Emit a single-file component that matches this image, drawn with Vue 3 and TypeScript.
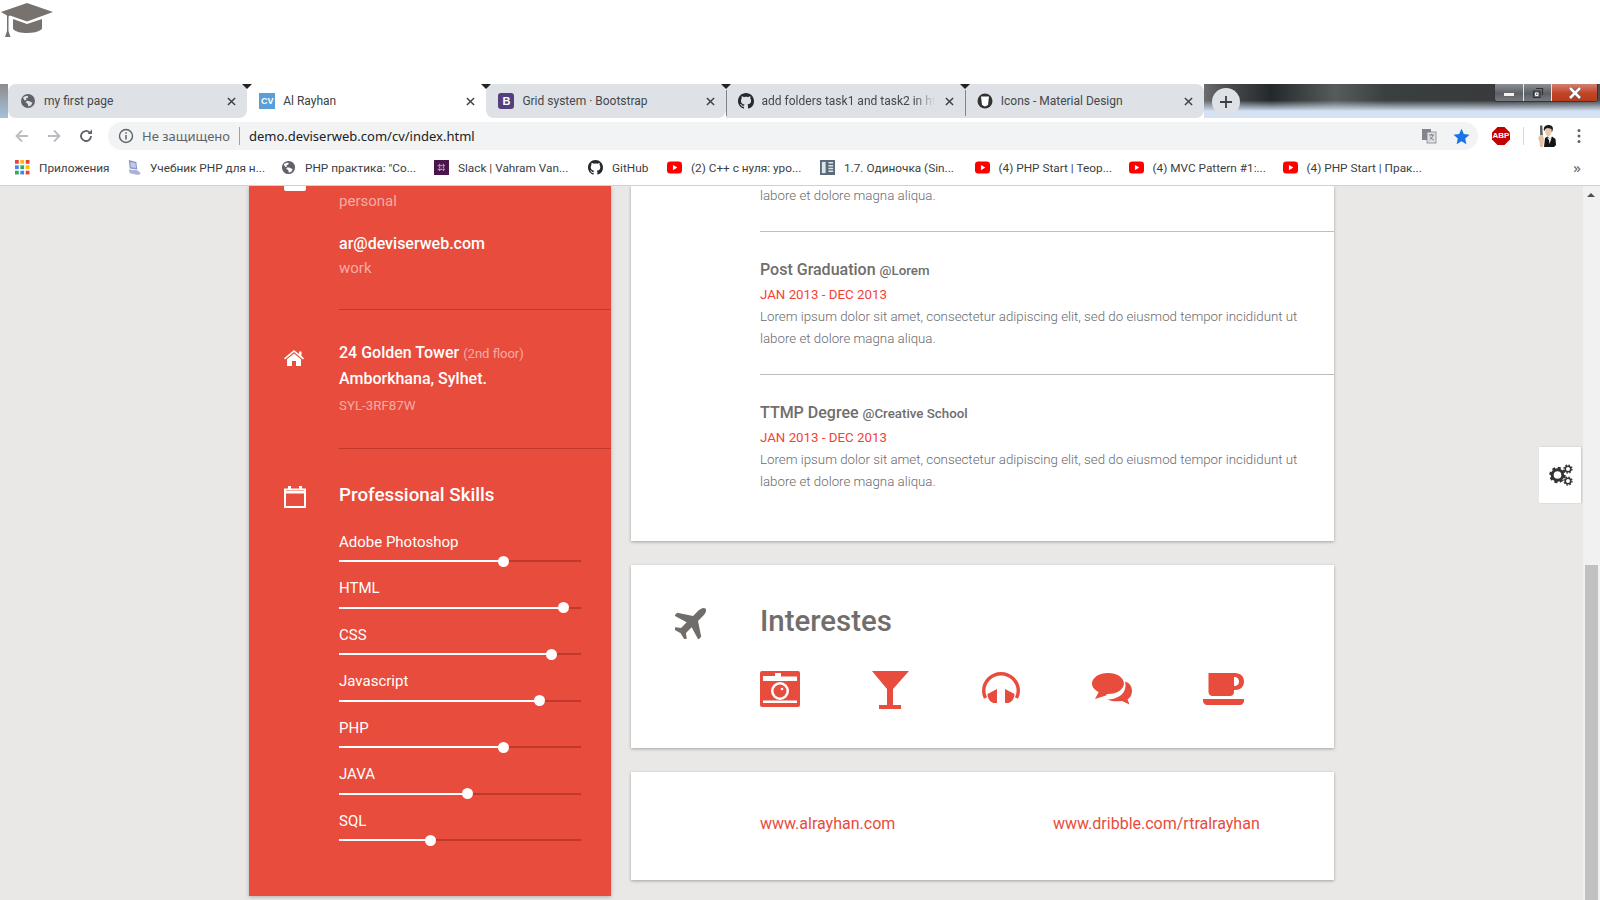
<script setup lang="ts">
const tabs = [
  { title: 'my first page', icon: 'globe', active: false, sep: false, fade: false },
  { title: 'Al Rayhan', icon: 'cv', active: true, sep: false, fade: false },
  { title: 'Grid system · Bootstrap', icon: 'boot', active: false, sep: false, fade: false },
  { title: 'add folders task1 and task2 in ht', icon: 'git', active: false, sep: true, fade: true },
  { title: 'Icons - Material Design', icon: 'mat', active: false, sep: true, fade: false }
]
const marks = [
  { title: 'Приложения', icon: 'apps', w: 111 },
  { title: 'Учебник PHP для н...', icon: 'laptop', w: 155 },
  { title: 'PHP практика: "Со...', icon: 'globe', w: 153 },
  { title: 'Slack | Vahram Van...', icon: 'slack', w: 154 },
  { title: 'GitHub', icon: 'git', w: 79 },
  { title: '(2) C++ с нуля: уро...', icon: 'yt', w: 153 },
  { title: '1.7. Одиночка (Sin...', icon: 'list', w: 154.5 },
  { title: '(4) PHP Start | Теор...', icon: 'yt', w: 154 },
  { title: '(4) MVC Pattern #1:...', icon: 'yt', w: 154 },
  { title: '(4) PHP Start | Прак...', icon: 'yt', w: 150 }
]
const skills = [
  { name: 'Adobe Photoshop', at: 164 },
  { name: 'HTML', at: 224 },
  { name: 'CSS', at: 212 },
  { name: 'Javascript', at: 200 },
  { name: 'PHP', at: 164 },
  { name: 'JAVA', at: 128 },
  { name: 'SQL', at: 91 }
]
const lorem = 'Lorem ipsum dolor sit amet, consectetur adipiscing elit, sed do eiusmod tempor incididunt ut labore et dolore magna aliqua.'
const gitPath = 'M8 0C3.58 0 0 3.58 0 8c0 3.54 2.29 6.53 5.47 7.59.4.07.55-.17.55-.38 0-.19-.01-.82-.01-1.49-2.01.37-2.53-.49-2.69-.94-.09-.23-.48-.94-.82-1.13-.28-.15-.68-.52-.01-.53.63-.01 1.08.58 1.23.82.72 1.21 1.87.87 2.33.66.07-.52.28-.87.51-1.07-1.78-.2-3.64-.89-3.64-3.95 0-.87.31-1.59.82-2.15-.08-.2-.36-1.02.08-2.12 0 0 .67-.21 2.2.82.64-.18 1.32-.27 2-.27.68 0 1.36.09 2 .27 1.53-1.04 2.2-.82 2.2-.82.44 1.1.16 1.92.08 2.12.51.56.82 1.27.82 2.15 0 3.07-1.87 3.75-3.65 3.95.29.25.54.73.54 1.48 0 1.07-.01 1.93-.01 2.2 0 .21.15.46.55.38A8.013 8.013 0 0016 8c0-4.42-3.58-8-8-8z'
const globePath = 'M8 1a7 7 0 1 0 0 14A7 7 0 0 0 8 1zM3 4.5c1-.8 2.200-1.500 3.500-1.700L8.500 3.500 7.500 5 6 5.300 6.300 7 4.500 7.500zM8.500 13.500 7.500 10.500 5.500 9.500 7 7.800 9.500 8.200 12.500 9.800 11 12.500z'
</script>

<template>
  <div class="screen">
    <div class="desktop-top">
      <svg class="cap" viewBox="0 0 54 37" width="54" height="37">
        <path fill="#77726e" d="M1 11 27 2 53 11 27 20.500 10 14.500 8.500 15.500V30L10.500 36H5L7 30V14.500z" />
        <path fill="#77726e" d="M13 18 27 23 42 18V28C38 31 33 32 27 32 21 32 16 31 13 28z" />
      </svg>
    </div>

    <div class="tabstrip">
      <div class="frame-left"></div>
      <div v-for="(t, i) in tabs" :key="t.title" class="tab" :class="{ active: t.active, sep: t.sep, lastTab: i === tabs.length - 1 }">
        <span v-if="i > 0" class="tick"></span>
        <svg v-if="t.icon === 'globe'" class="fav" viewBox="0 0 16 16"><path fill="#5f6368" fill-rule="evenodd" :d="globePath" /></svg>
        <span v-else-if="t.icon === 'cv'" class="fav cv">CV</span>
        <span v-else-if="t.icon === 'boot'" class="fav boot">B</span>
        <svg v-else-if="t.icon === 'git'" class="fav" viewBox="0 0 16 16"><path fill="#24292e" :d="gitPath" /></svg>
        <svg v-else class="fav" viewBox="0 0 16 16"><circle cx="8" cy="8" r="7.500" fill="#333" /><path fill="#fff" d="M4 3.500h8L11 12 8 13.500 5 12z" /></svg>
        <span class="tab-title" :class="{ fade: t.fade }">{{ t.title }}</span>
        <svg class="tab-x" viewBox="0 0 10 10"><path d="M1 1l8 8M9 1l-8 8" stroke="#3c4043" stroke-width="1.600" /></svg>
      </div>
      <div class="frame-right">
        <span class="plus">
          <svg viewBox="0 0 14 14" width="14" height="14"><path d="M7 1v12M1 7h12" stroke="#3c4043" stroke-width="1.800" /></svg>
        </span>
        <div class="winbtns">
          <span class="wb wb-a"><i class="wb-min"></i></span>
          <span class="wb wb-b">
            <svg viewBox="0 0 12 12" width="12" height="12"><path d="M4 1.500h6.500V8M1.500 4h6.500v6.500H1.500z" fill="none" stroke="#333" stroke-width="1.200" /><path d="M3.500 6h2.500v2.500H3.500z" fill="none" stroke="#fff" stroke-width="1" /></svg>
          </span>
          <span class="wb wb-close">
            <svg viewBox="0 0 14 12" width="14" height="12"><path d="M2 1l10 10M12 1 2 11" stroke="#555" stroke-width="3.800" /><path d="M2 1l10 10M12 1 2 11" stroke="#fff" stroke-width="2.600" /></svg>
          </span>
        </div>
      </div>
    </div>

    <div class="toolbar">
      <svg class="nav" viewBox="0 0 16 16"><path d="M14 8H3M8 2.500 2.500 8 8 13.500" fill="none" stroke="#b9bcc0" stroke-width="1.800" /></svg>
      <svg class="nav" viewBox="0 0 16 16"><path d="M2 8h11M8 2.500 13.500 8 8 13.500" fill="none" stroke="#b9bcc0" stroke-width="1.800" /></svg>
      <svg class="nav" viewBox="0 0 16 16"><path d="M13 8a5 5 0 1 1-1.500-3.600" fill="none" stroke="#5f6368" stroke-width="1.800" /><path fill="#5f6368" d="M9.500 6H14V1.500z" /></svg>
      <div class="omni">
        <svg class="info" viewBox="0 0 16 16" width="16" height="16"><circle cx="8" cy="8" r="6.500" fill="none" stroke="#5f6368" stroke-width="1.400" /><path d="M8 7v4.500M8 4.300v1.500" stroke="#5f6368" stroke-width="1.500" /></svg>
        <span class="insecure">Не защищено</span>
        <span class="omni-sep"></span>
        <span class="url">demo.deviserweb.com/cv/index.html</span>
        <svg class="trans" viewBox="0 0 16 16" width="16" height="16"><rect x="1" y="1" width="9" height="11" fill="#80868b" /><rect x="6" y="4" width="9" height="11" fill="#dfe1e3" stroke="#80868b" stroke-width=".8" /><path d="M8 7h5M10.500 6v1M12 7c-.5 2.500-2 4-3.500 5M9 8.500c1 2 2.500 3 4 3.500" fill="none" stroke="#666" stroke-width=".8" /></svg>
        <svg class="star" viewBox="0 0 16 16" width="17" height="17"><path fill="#1a73e8" d="M8 .8l2.200 4.900 5.300.6-4 3.600 1.100 5.300L8 12.500l-4.600 2.700 1.100-5.300-4-3.600 5.300-.6z" /></svg>
      </div>
      <div class="ext">
        <svg viewBox="0 0 18 18" width="18" height="18"><path fill="#c30000" d="M5.500 0h7L18 5.500v7L12.500 18h-7L0 12.500v-7z" /></svg>
        <span class="abp">ABP</span>
      </div>
      <span class="ext-sep"></span>
      <svg class="avatar" viewBox="0 0 19 22" width="19" height="22">
        <path fill="#1c1c1c" d="M7 6C6 2 8.500 0 11.500 0S17 2 15.500 6l-1 1C14 4 12 3.500 10.500 3.500 9 3.500 8 5 7 6z" />
        <path fill="#eac8ac" d="M8 4c2-1 4-1 6.500 0 .5 3-1 7.500-3.300 7.500S8 7.500 8 4z" />
        <path fill="#141414" d="M7 22 8 13 10.500 11.500 13 14 15 11.500 18.500 14 19 20 17 22z" />
        <path fill="#fff" d="M9.800 12.500 12 15 12.500 19 14.800 12 13 13.800z" />
        <path fill="#5d5d5d" d="M3 .5h2.300l.5 9.500H3.200z" />
        <path fill="#e6c3a6" d="M1 13l2-3h3l1 4-1 8H3L2.500 17z" />
      </svg>
      <svg class="dots" viewBox="0 0 4 16" width="4" height="16"><circle cx="2" cy="2.500" r="1.500" fill="#5f6368" /><circle cx="2" cy="8" r="1.500" fill="#5f6368" /><circle cx="2" cy="13.500" r="1.500" fill="#5f6368" /></svg>
    </div>

    <div class="bookmarks">
      <div v-for="m in marks" :key="m.title" class="mark" :style="{ width: m.w + 'px' }">
        <svg v-if="m.icon === 'apps'" class="mi" viewBox="0 0 14 14">
          <g v-for="r in 3" :key="r">
            <rect v-for="c in 3" :key="c" :x="(c - 1) * 5" :y="(r - 1) * 5" width="3.500" height="3.500" :fill="['#e94235', '#fbbc04', '#e94235', '#4285f4', '#34a853', '#fbbc04', '#34a853', '#4285f4', '#e94235'][(r - 1) * 3 + c - 1]" />
          </g>
        </svg>
        <svg v-else-if="m.icon === 'laptop'" class="mi" viewBox="0 0 16 16"><path fill="#8a93c8" d="M3 0l8 2 1 8-8-1z" /><path fill="#c4c9ea" d="M4.500 2l5.500 1.300.7 5.200-5.500-.7z" /><path fill="#aab0dc" d="M3 10l9 1 4 3-3 2-9-2z" /></svg>
        <svg v-else-if="m.icon === 'globe'" class="mi" viewBox="0 0 16 16"><path fill="#5f6368" fill-rule="evenodd" :d="globePath" /></svg>
        <svg v-else-if="m.icon === 'slack'" class="mi" viewBox="0 0 16 16"><rect width="16" height="16" fill="#4a154b" /><path d="M6 4v8M10 4v8M4 6h8M4 10h8" stroke="#b89ab8" stroke-width="1.300" stroke-dasharray="2 .8" /></svg>
        <svg v-else-if="m.icon === 'git'" class="mi" viewBox="0 0 16 16"><path fill="#24292e" :d="gitPath" /></svg>
        <svg v-else-if="m.icon === 'yt'" class="mi" viewBox="0 0 16 16"><rect y="1.500" width="16" height="13" rx="3.500" fill="#f00" /><path fill="#fff" d="M6.300 5.200 11 8l-4.700 2.800z" /></svg>
        <svg v-else class="mi" viewBox="0 0 16 16"><rect width="16" height="16" fill="#5a6a78" /><rect x="2" y="2" width="4" height="12" fill="#dfe4e8" /><path d="M9 3h5M9 6h5M9 9h5M9 12h5" stroke="#dfe4e8" stroke-width="1.600" /></svg>
        <span class="mark-t">{{ m.title }}</span>
      </div>
      <span class="more">»</span>
    </div>

    <div class="page">
      <div class="columns">
        <aside class="side">
          <div class="side-row contact">
            <div class="side-ic"><span class="mail-tail"></span></div>
            <div class="side-tx">
              <div class="dim">personal</div>
              <div class="strong gap-top">ar@deviserweb.com</div>
              <div class="dim">work</div>
            </div>
          </div>
          <div class="side-row address">
            <div class="side-ic">
              <svg class="home" viewBox="0 0 20 16" width="20" height="16"><path fill="#fff" d="M10 0 15 4V1.500h2.500V6L20 8.300 19 9.500 10 2 1 9.500 0 8.300z" /><path fill="#fff" d="M10 3.500 17 9.300V16h-5v-5H8v5H3V9.300z" /></svg>
            </div>
            <div class="side-tx tall">
              <div class="strong first-line">24 Golden Tower <small>(2nd floor)</small></div>
              <div class="strong">Amborkhana, Sylhet.</div>
              <div class="zip">SYL-3RF87W</div>
            </div>
          </div>
          <div class="side-row skills">
            <div class="side-ic">
              <svg class="cal" viewBox="0 0 22 22" width="22" height="22"><path fill="none" stroke="#fff" stroke-width="2" d="M1 3.500h20V21H1z" /><path fill="#fff" d="M1 5h20v2.500H1zM4 0h3v4H4zM15 0h3v4h-3z" /></svg>
            </div>
            <div class="side-tx">
              <h3>Professional Skills</h3>
              <div v-for="s in skills" :key="s.name" class="skill">
                <div class="skill-name">{{ s.name }}</div>
                <div class="track">
                  <div class="fill" :style="{ width: s.at + 'px' }"><span class="knob"></span></div>
                </div>
              </div>
            </div>
          </div>
        </aside>

        <main class="right">
          <section class="card first">
            <p class="cut">labore et dolore magna aliqua.</p>
            <div class="entry">
              <h4>Post Graduation <small>@Lorem</small></h4>
              <div class="date">JAN 2013 - DEC 2013</div>
              <p>{{ lorem }}</p>
            </div>
            <div class="entry last">
              <h4>TTMP Degree <small>@Creative School</small></h4>
              <div class="date">JAN 2013 - DEC 2013</div>
              <p>{{ lorem }}</p>
            </div>
          </section>

          <section class="card interests">
            <div class="plane-col">
              <svg viewBox="-17 -17 34 34" width="34" height="34"><path fill="#6f6c69" transform="rotate(45)" d="M0-19C2-19 3.500-16 3.500-13V-5L17 4V8L3.500 4V12L8 15.500V18L0 16-8 18V15.500L-3.500 12V4L-17 8V4L-3.500-5V-13C-3.500-16-2-19 0-19Z" /></svg>
            </div>
            <div>
              <h2>Interestes</h2>
              <div class="hobbies">
                <div class="hobby">
                  <svg viewBox="0 0 40 36" width="40" height="36"><rect width="40" height="36" rx="2" fill="#e74c3c" /><path fill="#fff" d="M3 5h12V2h6v3.500h16V10H3zM3 29.500h34V32H3z" /><circle cx="20" cy="20" r="9" fill="#fff" /><circle cx="20" cy="20" r="6.500" fill="#e74c3c" /><circle cx="22" cy="18" r="1.300" fill="#fff" /></svg>
                </div>
                <div class="hobby martini">
                  <svg viewBox="0 0 37 38" width="37" height="38"><path fill="#e74c3c" d="M0 0H37L21 18V34H29V38H7V34H15V18z" /></svg>
                </div>
                <div class="hobby phones">
                  <svg viewBox="0 0 38 32" width="38" height="32">
                    <path fill="none" stroke="#e74c3c" stroke-width="3.400" d="M3.500 26C2.200 23.500 1.700 21 1.700 19A17.300 17.300 0 0 1 36.300 19C36.300 21 35.800 23.500 34.500 26" />
                    <path fill="#e74c3c" d="M5.500 22 15 17V31H11.500C8 30 5.500 26.500 5.500 22zM32.500 22 23 17V31H26.500C30 30 32.500 26.500 32.500 22z" />
                  </svg>
                </div>
                <div class="hobby">
                  <svg viewBox="0 0 40 32" width="40" height="32">
                    <path fill="#e74c3c" d="M16 0C25 0 32 4.700 32 10.500S25 21 16 21C15 21 14.500 21 14 22.500L3 26 6.700 19C2.500 17 0 14 0 10.500 0 4.700 7 0 16 0z" />
                    <path fill="#e74c3c" d="M33 8.500C38 10 40 14 40 18 40 22 38 25 35.500 26.500L37.500 31.500 30 28C25 28.500 20 28.500 15 26.500 25 26.500 36 21 33 8.500z" />
                  </svg>
                </div>
                <div class="hobby">
                  <svg viewBox="0 0 41 32" width="41" height="32">
                    <path fill="#e74c3c" fill-rule="evenodd" d="M5.500 0H32C37.500 0 41 3.500 41 8.500 41 13.500 37.500 17 32 17H31V19C31 21.500 29 23 27 23H9.500C7.500 23 5.500 21.500 5.500 19zM31 4V13C34.500 13 36 11 36 8.500 36 6 34.500 4 31 4z" />
                    <path fill="#e74c3c" d="M0 26H41V28C41 30 39 32 37 32H4C2 32 0 30 0 28z" />
                  </svg>
                </div>
              </div>
            </div>
          </section>

          <section class="card links">
            <a class="link wide">www.alrayhan.com</a>
            <a class="link">www.dribble.com/rtralrayhan</a>
          </section>
        </main>
      </div>

      <div class="gear">
        <svg viewBox="0 0 24 22" width="24" height="22">
          <circle cx="8.500" cy="11" r="5.300" fill="none" stroke="#333" stroke-width="3" />
          <circle cx="8.500" cy="11" r="7" fill="none" stroke="#333" stroke-width="2.500" stroke-dasharray="3 2.500" />
          <circle cx="19" cy="5" r="2.800" fill="none" stroke="#333" stroke-width="1.600" />
          <circle cx="19" cy="5" r="4" fill="none" stroke="#333" stroke-width="1.300" stroke-dasharray="1.600 1.540" />
          <circle cx="19" cy="17" r="2.800" fill="none" stroke="#333" stroke-width="1.600" />
          <circle cx="19" cy="17" r="4" fill="none" stroke="#333" stroke-width="1.300" stroke-dasharray="1.600 1.540" />
        </svg>
      </div>

      <div class="scrollbar">
        <span class="arrow"></span>
        <span class="thumb"></span>
      </div>
    </div>
  </div>
</template>

<style scoped>
.screen { width: 1600px; height: 900px; overflow: hidden; display: flex; flex-direction: column; background: #fff; font-family: Roboto, "Noto Sans", sans-serif; }
.desktop-top { height: 84px; flex: none; padding-top: 1px; box-sizing: border-box; }
.cap { display: block; }

.tabstrip { height: 34px; flex: none; display: flex; }
.frame-left { width: 8px; background: linear-gradient(to bottom, #8c8c8c, #a8c0dc); }
.tab { width: 239.200px; height: 34px; box-sizing: border-box; display: flex; align-items: center; padding: 0 8px 0 12px; background: #dee1e6; border-radius: 8px; position: relative; font: 12px Roboto, sans-serif; color: #44474b; }
.tab.active { background: #fff; color: #3c4043; border-radius: 8px 8px 0 0; }
.tab.sep { border-radius: 0; }
.tab.sep::before { content: ""; position: absolute; left: 0; top: 6px; bottom: 2px; width: 1px; background: #80848a; }
.tab.lastTab { border-radius: 0 8px 8px 0; }
.tick { position: absolute; left: -5px; top: 0; width: 0; height: 0; border: 5px solid transparent; border-top-color: #222; border-bottom: 0; }
.fav { width: 16px; height: 16px; flex: none; display: block; margin-right: 8px; }
.cv { background: #5a9fd8; color: #fff; font: bold 9px/16px "Liberation Sans", sans-serif; text-align: center; }
.boot { background: #563d7c; color: #fff; font: bold 11px/16px "Liberation Sans", sans-serif; text-align: center; border-radius: 3px; }
.tab-title { flex: 1; min-width: 0; overflow: hidden; white-space: nowrap; }
.tab-title.fade { -webkit-mask-image: linear-gradient(to right, #000 88%, transparent 100%); mask-image: linear-gradient(to right, #000 88%, transparent 100%); }
.tab-x { width: 9px; height: 9px; flex: none; margin: 0 3px 0 10px; }
.frame-right { flex: 1; position: relative; display: flex; justify-content: space-between; background: linear-gradient(to bottom, rgba(212,226,244,0) 48%, rgba(212,226,244,1) 80%), linear-gradient(to right, #6b6d6e 0, #4a4c4e 6%, #23282a 17%, #565c5c 33%, #3a3f40 46%, #383a3b 75%, #4c4e50 100%); }
.plus { width: 28px; height: 28px; margin: 4px 0 0 8px; background: #dee1e6; border-radius: 50%; display: flex; align-items: center; justify-content: center; }
.winbtns { display: flex; height: 18px; margin-right: 2px; border: 1px solid #33373b; border-top: 0; border-radius: 0 0 4px 4px; box-shadow: inset 0 0 0 1px rgba(255,255,255,.55); box-sizing: border-box; width: 104px; overflow: hidden; }
.wb { flex: none; display: flex; align-items: center; justify-content: center; border-right: 1px solid #e5e5e5; }
.wb-a { width: 28px; background: linear-gradient(to bottom, #8a8f93, #5d6165 55%, #767a7e); }
.wb-b { width: 27px; background: linear-gradient(to bottom, #8a8f93, #5d6165 55%, #767a7e); }
.wb-min { width: 10px; height: 3px; background: #f2f2f2; margin-top: 4px; border: 1px solid #666; box-sizing: content-box; }
.wb-close { flex: 1; border: 0; background: linear-gradient(to bottom, #d08070, #c24427 55%, #b63a1c); }

.toolbar { height: 34px; flex: none; display: flex; align-items: center; box-sizing: border-box; padding-left: 14px; padding-right: 19px; padding-top: 2px; }
.nav { width: 16px; height: 16px; flex: none; margin-right: 16px; }
.omni { width: 1370px; height: 28px; margin-left: -2px; background: #f1f3f4; border-radius: 14px; display: flex; align-items: center; padding-left: 10px; box-sizing: border-box; flex: none; }
.info { flex: none; margin-right: 8px; }
.insecure { font: 13px "Noto Sans", sans-serif; color: #5f6368; width: 89px; white-space: nowrap; flex: none; }
.omni-sep { width: 1px; height: 18px; background: #9aa0a6; margin: 0 9px 0 8px; flex: none; }
.url { font: 13px "Noto Sans", sans-serif; color: #202124; flex: 1; white-space: nowrap; }
.trans { flex: none; margin-right: 16px; }
.star { flex: none; margin-right: 8px; }
.ext { width: 18px; height: 18px; position: relative; margin-left: 14px; flex: none; }
.ext svg { display: block; }
.abp { position: absolute; inset: 0; color: #fff; font: bold 8px/18px "Liberation Sans", sans-serif; text-align: center; }
.ext-sep { width: 1px; height: 18px; background: #d8d9db; margin-left: 13px; flex: none; }
.avatar { flex: none; margin-left: 13px; }
.dots { flex: none; margin-left: 21px; }

.bookmarks { height: 34px; flex: none; display: flex; align-items: center; padding: 0 0 2px 15px; box-sizing: border-box; border-bottom: 1px solid #d0d1d3; position: relative; }
.mark { display: flex; align-items: center; flex: none; font: 11.800px Roboto, "Noto Sans", sans-serif; color: #3c4043; white-space: nowrap; }
.mi { width: 15px; height: 15px; flex: none; margin-right: 9px; }
.more { position: absolute; right: 19px; top: 5px; font: 15px "Noto Sans", sans-serif; color: #5f6368; }

.page { height: 714px; flex: none; background: #e9e8e6; position: relative; overflow: hidden; display: flex; }
.columns { flex: 1; display: flex; align-items: flex-start; padding-left: 249px; gap: 20px; }

.side { width: 362px; height: 710px; flex: none; background: #e74c3c; box-shadow: 0 1px 4px rgba(0,0,0,.25); color: #fff; }
.side-row { display: flex; }
.side-ic { width: 90px; flex: none; padding-left: 35px; box-sizing: border-box; }
.side-tx { flex: 1; line-height: 24px; font-size: 16px; border-bottom: 1px solid #c0392b; }
.contact .side-tx { padding: 3px 0 29px; }
.mail-tail { display: block; width: 22px; height: 5px; background: #fff; border-radius: 0 0 2px 2px; }
.dim { color: rgba(255,255,255,.55); font-size: 15px; font-weight: 400; }
.strong { font-weight: 500; }
.gap-top { margin-top: 19px; }
.address .side-tx { padding: 30px 0 29px; line-height: 26px; }
.first-line { line-height: 25px; }
.home { display: block; margin-top: 40px; }
.strong small { font-size: 13px; font-weight: 400; color: rgba(255,255,255,.55); }
.zip { font-size: 13.300px; color: rgba(255,255,255,.55); margin-top: 1px; }
.skills .side-tx { border: 0; padding-top: 31px; padding-right: 30px; }
.cal { display: block; margin-top: 37px; }
h3 { margin: 0 0 20px; font-size: 18.800px; line-height: 30px; font-weight: 500; }
.skill { height: 46.500px; display: flow-root; }
.skill-name { font-size: 15px; line-height: 24px; font-weight: 400; margin-top: -.3px; margin-bottom: 6.300px; }
.track { height: 2px; background: #c0392b; }
.fill { height: 2px; background: #fff; position: relative; }
.knob { position: absolute; right: -5.500px; top: -4.500px; width: 11px; height: 11px; border-radius: 50%; background: #fff; }

.right { width: 703px; flex: none; display: flex; flex-direction: column; gap: 24px; }
.card { background: #fff; box-shadow: 0 1px 3px rgba(0,0,0,.3); }
.first { height: 355px; padding-left: 129px; box-sizing: border-box; }
.first p { margin: 0; padding-right: 30px; font-size: 13.300px; line-height: 22px; font-weight: 300; color: #6b6b6b; }
.first .cut { margin-top: -1px; padding-bottom: 24px; }
.entry { border-top: 1px solid #bdbdbd; padding: 26px 0 24px; }
h4 { margin: 0 0 1px; font-size: 16px; line-height: 24px; font-weight: 500; color: #706d6b; }
h4 small { font-size: 13.300px; font-weight: 500; }
.date { font-size: 13.300px; line-height: 22px; color: #f44336; }
.interests { height: 183px; display: flex; box-sizing: border-box; padding-top: 36px; }
.plane-col { width: 129px; flex: none; padding: 4px 0 0 44px; box-sizing: border-box; }
.plane-col svg { display: block; }
h2 { margin: 0; font-size: 29.400px; line-height: 40px; font-weight: 500; color: #706d6b; }
.hobbies { display: flex; margin-top: 29px; }
.hobby { width: 110.800px; height: 38px; display: flex; align-items: center; }
.martini svg { margin: 2px 0 0 1px; }
.phones svg { margin-bottom: 3px; }
.links { height: 108px; display: flex; box-sizing: border-box; padding: 40px 0 0 129px; }
.link { flex: none; font-size: 16px; line-height: 24px; color: #e74c3c; }
.link.wide { width: 293px; }

.gear { position: absolute; right: 19px; top: 261px; width: 42px; height: 56px; padding-left: 2px; box-sizing: border-box; background: #fff; box-shadow: 1px 0 2px rgba(0,0,0,.15); display: flex; align-items: center; justify-content: center; }
.scrollbar { width: 17px; flex: none; background: #f1f1f1; position: relative; }
.arrow { position: absolute; left: 4px; top: 7px; width: 0; height: 0; border: 4px solid transparent; border-bottom: 4px solid #505050; border-top: 0; }
.thumb { position: absolute; left: 2px; right: 2px; top: 379px; bottom: 0; background: #c1c1c1; }
</style>

<style>
html, body { margin: 0; background: #fff; }
</style>
